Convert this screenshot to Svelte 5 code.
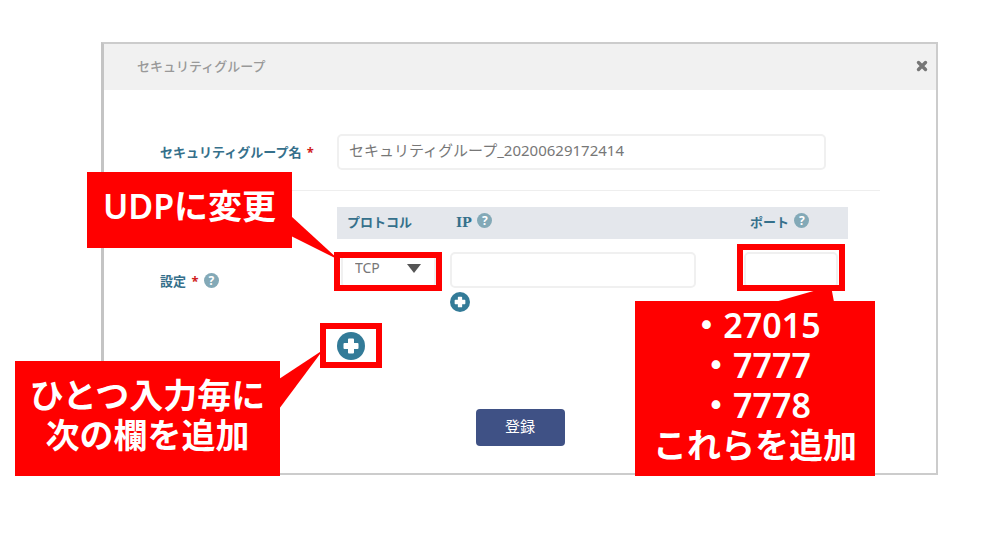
<script lang="ts">
  let groupName = $state("セキュリティグループ_20200629172414");
  let protocol = $state("TCP");
  let ip = $state("");
  let port = $state("");

  function handleSubmit(e: Event) {
    e.preventDefault();
  }
</script>

{#snippet help(label: string)}
  <button type="button" class="help" aria-label={label}>?</button>
{/snippet}

{#snippet plus()}
  <svg viewBox="0 0 28 28" aria-hidden="true">
    <circle cx="14" cy="14" r="14" fill="#337b98" />
    <path d="M12 6.5h4a1 1 0 0 1 1 1V11h3.500a1 1 0 0 1 1 1v4a1 1 0 0 1-1 1H17v3.500a1 1 0 0 1-1 1h-4a1 1 0 0 1-1-1V17H7.500a1 1 0 0 1-1-1v-4a1 1 0 0 1 1-1H11V7.500a1 1 0 0 1 1-1z" fill="#fff" />
  </svg>
{/snippet}

<main>
  <section class="dialog">
    <header>
      <h1>セキュリティグループ</h1>
      <button type="button" class="close" aria-label="閉じる">
        <svg viewBox="0 0 12 12" aria-hidden="true">
          <path d="M2.500 2.500l7 7M9.500 2.500l-7 7" stroke="#777" stroke-width="3.400" stroke-linecap="round" />
        </svg>
      </button>
    </header>

    <form onsubmit={handleSubmit}>
      <div class="form-row name-row">
        <label for="groupName">セキュリティグループ名 <span class="required">*</span></label>
        <div class="field">
          <input id="groupName" type="text" bind:value={groupName} />
        </div>
      </div>

      <div class="form-row">
        <div class="label">設定 <span class="required">*</span> {@render help("設定のヘルプ")}</div>
        <div class="rules">
          <table>
            <thead>
              <tr>
                <th class="col-protocol">プロトコル</th>
                <th><span class="latin">IP</span> {@render help("IPのヘルプ")}</th>
                <th class="col-port">ポート {@render help("ポートのヘルプ")}</th>
              </tr>
            </thead>
            <tbody>
              <tr>
                <td class="col-protocol">
                  <div class="select">
                    <select aria-label="プロトコル" bind:value={protocol}>
                      <option>TCP</option>
                      <option>UDP</option>
                    </select>
                  </div>
                </td>
                <td class="col-ip">
                  <input type="text" aria-label="IP" bind:value={ip} />
                  <button type="button" class="add small" aria-label="IPを追加">{@render plus()}</button>
                </td>
                <td class="col-port">
                  <input type="text" aria-label="ポート" bind:value={port} />
                </td>
              </tr>
            </tbody>
          </table>
          <button type="button" class="add" aria-label="設定を追加">{@render plus()}</button>
        </div>
      </div>

      <button type="submit" class="submit">登録</button>
    </form>
  </section>

  <!-- instructions laid over the dialog -->
  <svg class="tail tail-protocol" viewBox="0 0 48 48" aria-hidden="true"><path d="M0 4L48 48L0 24z" /></svg>
  <svg class="tail tail-add" viewBox="0 0 44 60" aria-hidden="true"><path d="M0 29L44 0L0 59z" /></svg>
  <svg class="tail tail-port" viewBox="0 0 60 16" aria-hidden="true"><path d="M0 16L56 0L59 16z" /></svg>

  <div class="mark mark-protocol"></div>
  <div class="mark mark-add"></div>
  <div class="mark mark-port"></div>

  <p class="callout callout-protocol">UDPに変更</p>
  <p class="callout callout-add">ひとつ入力毎に<br />次の欄を追加</p>
  <p class="callout callout-port">・27015<br />・7777<br />・7778<br />これらを追加</p>
</main>

<style>
  :global(body) { margin: 0; background: #fff; }
  * { box-sizing: border-box; }
  main { position: relative; padding: 42px 62px 75px 101px; font-family: "Noto Sans", "Noto Sans CJK JP", sans-serif; font-size: 13px; line-height: 20px; color: #777; }
  button, input, select { font: inherit; color: inherit; margin: 0; }
  button { padding: 0; border: 0; background: none; cursor: pointer; }
  svg { display: block; width: 100%; height: 100%; }

  .dialog { border: 2px solid #ccc; border-left: 3px solid #c4c4c4; background: #fff; }
  header { display: flex; align-items: center; justify-content: space-between; height: 46px; padding: 0 8px 3px 33px; background: #f1f1f1; }
  h1 { margin: 0; font-size: 13px; font-weight: 500; color: #999; }
  .close { width: 12px; height: 12px; }

  form { padding: 44px 56px 27px; }
  .form-row { display: grid; grid-template-columns: 177px 1fr; align-items: center; padding-top: 16px; }
  .name-row { padding: 0 0 20px; border-bottom: 1px solid #eee; }
  label, .label, th { font-weight: 700; color: #35708b; }
  .label { padding-bottom: 4px; }
  .required { margin-left: 2px; color: #d02020; }
  .field { padding-right: 54px; }
  input { display: block; width: 100%; height: 36px; padding: 0 10px 6px; border: 2px solid #f0f0f0; border-radius: 5px; background: #fff; font-size: 15px; outline: none; }

  .rules { padding-right: 32px; }
  table { width: 100%; border-collapse: collapse; table-layout: fixed; }
  th { height: 32px; padding: 0 0 2px 10px; background: #e4e7ec; text-align: left; }
  td { padding: 13px 0 0 4px; vertical-align: top; }
  th.col-protocol { width: 109px; }
  th.col-port { width: 108px; }
  td.col-protocol { padding-right: 10px; }
  td.col-ip { padding-right: 44px; }
  td.col-port { padding-right: 10px; }
  .latin { font-family: "DejaVu Serif", serif; }

  .select { position: relative; }
  .select::after { content: ""; position: absolute; top: 12px; right: 15px; border: 7px solid transparent; border-top: 9px solid #555; border-bottom: 0; pointer-events: none; }
  select { display: block; width: 100%; height: 36px; padding: 0 0 4px 12px; border: 2px solid #f0f0f0; border-radius: 5px; background: #fff; font-size: 14px; appearance: none; }

  .help { display: inline-block; width: 15px; height: 15px; margin: 0 0 4px 2px; border-radius: 8px; background: #83a9b7; color: #fff; font-size: 12px; font-weight: 700; line-height: 15px; vertical-align: middle; }
  .add { display: block; width: 28px; height: 28px; margin-top: 20px; }
  .add.small { width: 20px; height: 20px; margin-top: 4px; }
  .submit { display: block; width: 89px; height: 37px; margin: 49px auto 0; padding-bottom: 4px; border-radius: 4px; background: #3f5185; color: #fff; font-size: 15px; }

  .tail, .mark, .callout { position: absolute; pointer-events: none; }
  .tail { fill: #f00; }
  .tail-protocol { left: 291px; top: 212px; width: 48px; height: 48px; }
  .tail-add { left: 279px; top: 350px; width: 44px; height: 60px; }
  .tail-port { right: 165px; top: 286px; width: 60px; height: 16px; }

  .mark { border: 6px solid #f00; }
  .mark-protocol { left: 334px; top: 252px; width: 108px; height: 39px; }
  .mark-add { left: 320px; top: 323px; width: 62px; height: 45px; }
  .mark-port { right: 155px; top: 244px; width: 108px; height: 47px; }

  .callout { margin: 0; padding-bottom: 8px; display: grid; place-content: center; background: #f00; color: #fff; font-size: 34px; font-weight: 600; line-height: 40px; text-align: center; white-space: nowrap; }
  .callout-protocol { left: 87px; top: 172px; width: 205px; height: 76px; }
  .callout-add { left: 15px; top: 361px; width: 265px; height: 115px; }
  .callout-port { right: 125px; top: 301px; width: 240px; height: 175px; }
</style>
